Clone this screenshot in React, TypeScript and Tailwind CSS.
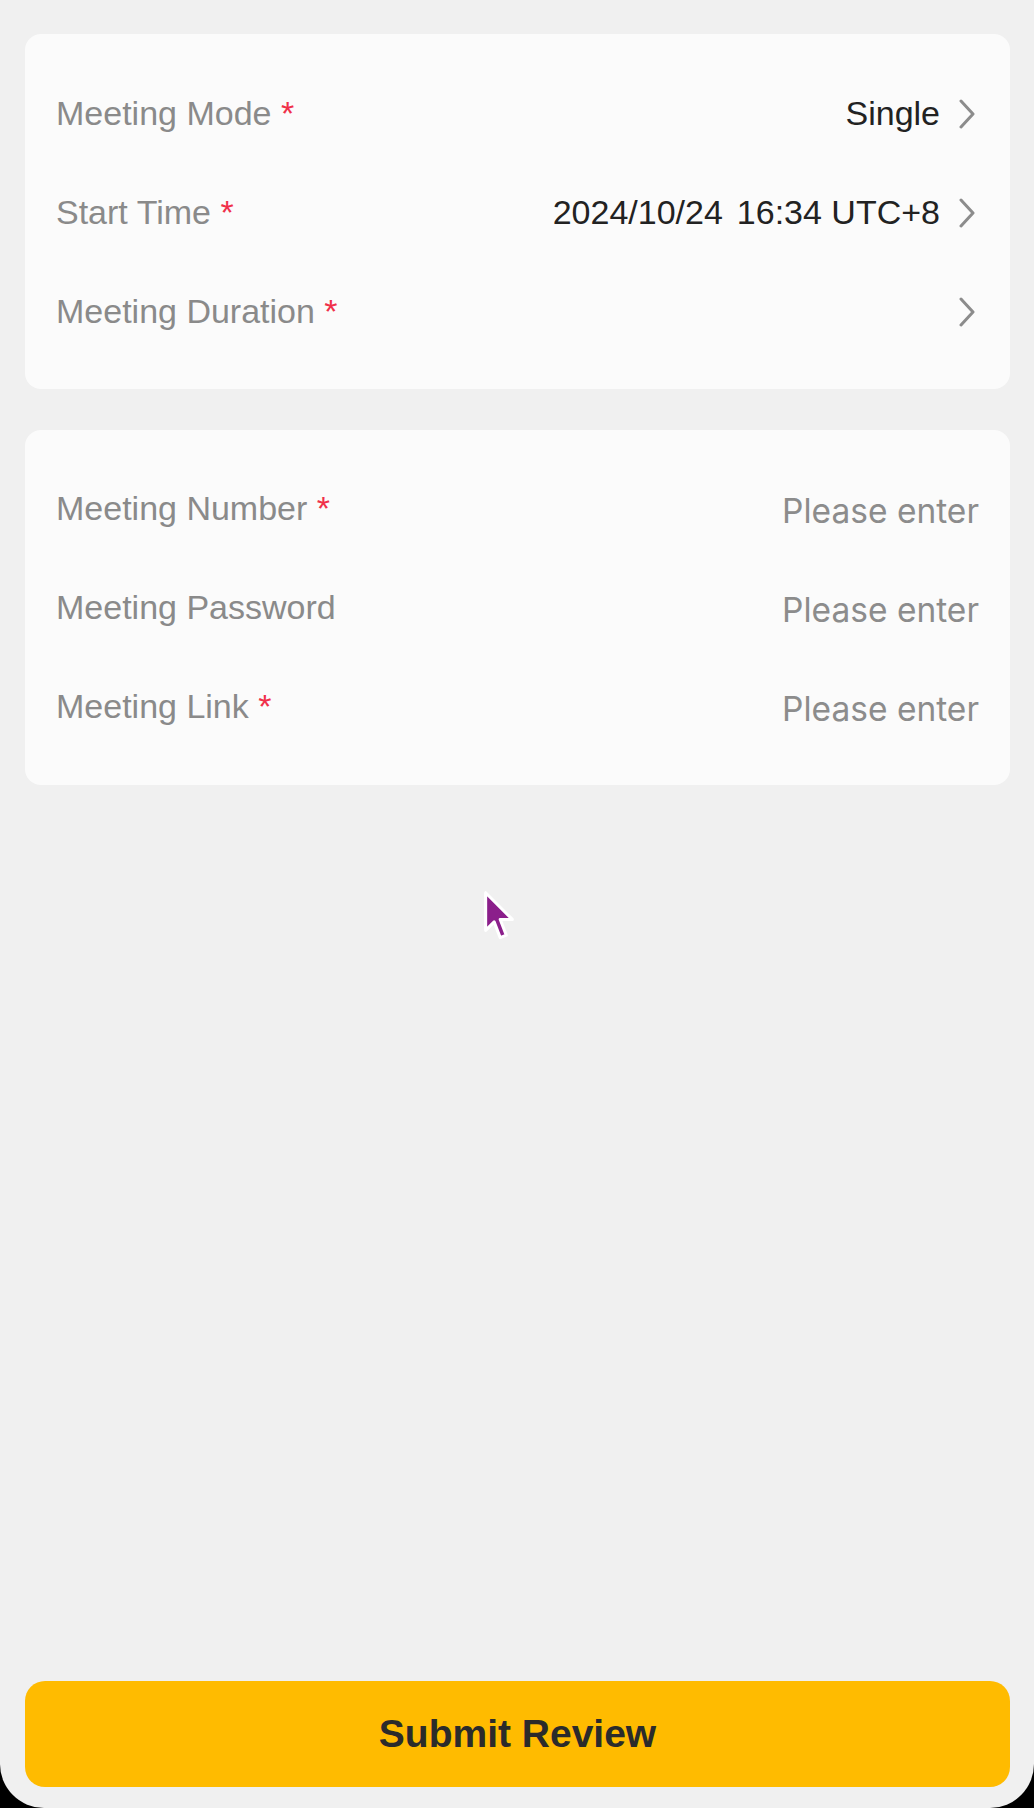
import React from "react";

const Chevron = () => (
  <svg width="18" height="30" viewBox="0 0 18 30" className="shrink-0">
    <polyline points="3,2 15,15 3,28" fill="none" stroke="#8c8c8c" strokeWidth="3" strokeLinecap="round" strokeLinejoin="round" />
  </svg>
);

const Label = ({ text, required }: { text: string; required?: boolean }) => (
  <span className="text-[34px] text-[#8a8a8a] whitespace-nowrap" style={{ fontFamily: '"Liberation Sans", Arial, sans-serif' }}>
    {text}
    {required && <span className="text-[#f0304a]"> *</span>}
  </span>
);

const SelectRow = ({ label, value, value2 }: { label: string; value?: string; value2?: string }) => (
  <div className="flex h-[99px] items-center justify-between">
    <Label text={label} required />
    <div className="flex items-center gap-[18px]">
      {value && (
        <span className="text-[34px] text-[#222222] whitespace-pre" style={{ fontFamily: '"Liberation Sans", Arial, sans-serif' }}>
          {value}
          {value2 && <span className="ml-[14px]">{value2}</span>}
        </span>
      )}
      <Chevron />
    </div>
  </div>
);

const InputRow = ({ label, required }: { label: string; required?: boolean }) => (
  <div className="flex h-[99px] items-center justify-between">
    <Label text={label} required={required} />
    <span className="text-[33.5px] text-[#8c8c8c] pt-[6px]" style={{ fontFamily: 'Inter, "Open Sans", sans-serif' }}>
      Please enter
    </span>
  </div>
);

export default function App() {
  return (
    <div className="bg-black w-[1034px] h-[1808px]">
      <div className="relative flex flex-col h-[1808px] bg-[#f0f0f0] rounded-b-[44px] pl-[25px] pr-[24px] pt-[34px] pb-[21px]">
        <div className="bg-[#fbfbfb] rounded-[16px] pl-[31px] pr-[34px] pt-[30px] pb-[28px]">
          <SelectRow label="Meeting Mode" value="Single" />
          <SelectRow label="Start Time" value="2024/10/24" value2="16:34 UTC+8" />
          <SelectRow label="Meeting Duration" />
        </div>
        <div className="mt-[41px] bg-[#fbfbfb] rounded-[16px] pl-[31px] pr-[31px] pt-[29px] pb-[29px]">
          <InputRow label="Meeting Number" required />
          <InputRow label="Meeting Password" />
          <InputRow label="Meeting Link" required />
        </div>
        <button
          className="mt-auto h-[106px] w-full rounded-[20px] bg-[#ffbb00] text-[39px] font-bold text-[#2b2b2b]"
          style={{ fontFamily: '"Liberation Sans", Arial, sans-serif' }}
        >
          Submit Review
        </button>
        <svg className="absolute left-[482px] top-[889px]" width="34" height="56" viewBox="0 0 28 46">
          <path d="M3 3 L3 34 L10 27 L15 40 L20 38 L15 25 L25 25 Z" fill="#8b1f8b" stroke="#ffffff" strokeWidth="2.5" strokeLinejoin="round" />
        </svg>
      </div>
    </div>
  );
}
